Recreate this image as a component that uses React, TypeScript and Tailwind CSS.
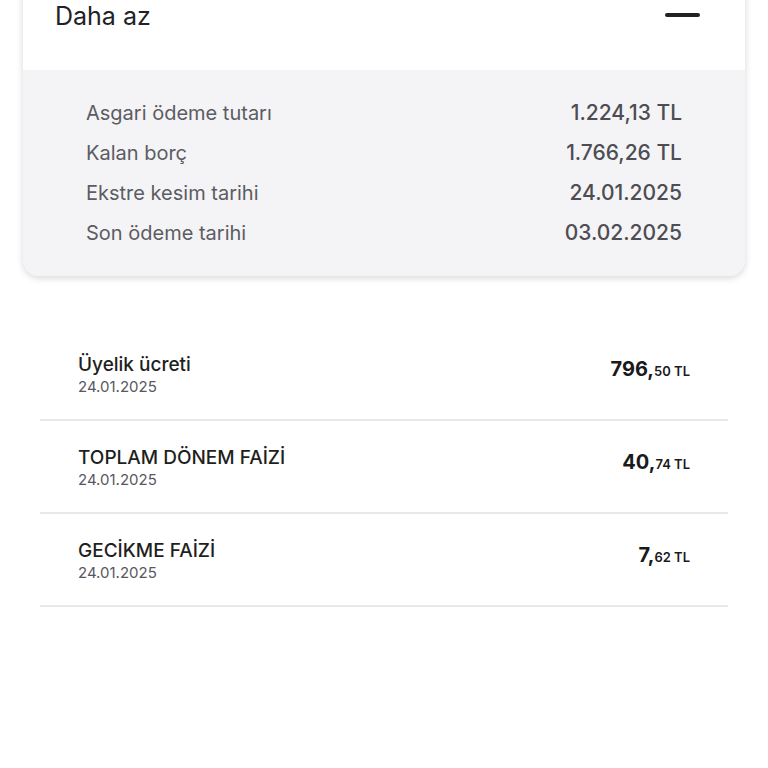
const summary = [
  { label: 'Asgari ödeme tutarı', value: '1.224,13 TL' },
  { label: 'Kalan borç', value: '1.766,26 TL' },
  { label: 'Ekstre kesim tarihi', value: '24.01.2025' },
  { label: 'Son ödeme tarihi', value: '03.02.2025' },
];

const items = [
  { title: 'Üyelik ücreti', date: '24.01.2025', whole: '796,', cents: '50 TL' },
  { title: 'TOPLAM DÖNEM FAİZİ', date: '24.01.2025', whole: '40,', cents: '74 TL' },
  { title: 'GECİKME FAİZİ', date: '24.01.2025', whole: '7,', cents: '62 TL' },
];

export default function App() {
  return (
    <div
      className="w-[768px] h-[768px] bg-white overflow-hidden"
      style={{ fontFamily: 'Inter, "Noto Sans", sans-serif' }}
    >
      <div className="mx-[23px] -mt-5 rounded-2xl bg-white overflow-hidden shadow-[0_2px_7px_rgba(0,0,0,0.16)]">
        <div className="h-[90px] pt-5 pl-8 pr-[45px] flex items-start justify-between">
          <span className="text-[25px] leading-8 text-[#222224]">Daha az</span>
          <span className="mt-[13px] block w-[35px] h-1 bg-[#222224] rounded-sm" />
        </div>
        <div className="bg-[#f4f4f6] pt-[23px] pb-[23px] pl-[63px] pr-[63px]">
          {summary.map((row) => (
            <div key={row.label} className="h-10 flex items-center justify-between">
              <span className="text-[20px] text-[#5c5c63]">{row.label}</span>
              <span className="text-[21px] font-medium text-[#4d4d53]">{row.value}</span>
            </div>
          ))}
        </div>
      </div>

      <div className="mx-10 mt-[52px]">
        {items.map((item) => (
          <div
            key={item.title}
            className="h-[93px] border-b-2 border-[#e8e8ea] pt-[25px] pl-[38px] pr-[38px] flex justify-between items-start"
          >
            <div>
              <div className="text-[19px] leading-6 font-medium text-[#1f1f22]">{item.title}</div>
              <div className="text-[15px] leading-5 text-[#58585d]">{item.date}</div>
            </div>
            <div className="pt-[1px] flex items-baseline text-[#1a1a1c]">
              <span className="text-[20px] font-bold">{item.whole}</span>
              <span className="text-[13px] font-semibold">{item.cents}</span>
            </div>
          </div>
        ))}
      </div>
    </div>
  );
}
